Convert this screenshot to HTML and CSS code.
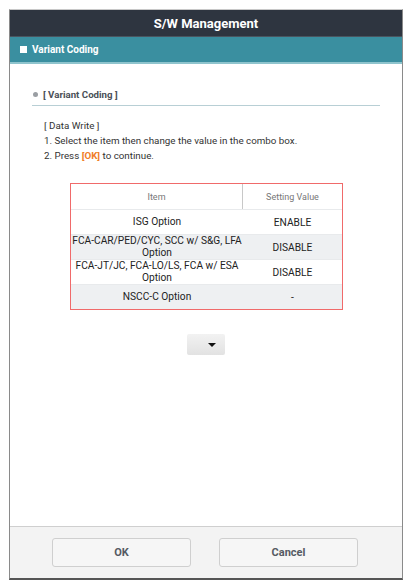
FILE: index.html
```html
<!DOCTYPE html>
<html>
<head>
<meta charset="utf-8">
<link rel="stylesheet" href="styles.css">
</head>
<body>
<div class="dialog">
  <div class="titlebar">S/W Management</div>
  <div class="subbar"><span class="sq"></span>Variant Coding</div>
  <div class="content">
    <div class="section-head"><span class="dot"></span>[ Variant Coding ]</div>
    <div class="instructions">
      <div>[ Data Write ]</div>
      <div>1. Select the item then change the value in the combo box.</div>
      <div>2. Press <span class="ok">[OK]</span> to continue.</div>
    </div>
    <div class="table">
      <div class="row head">
        <div class="c1">Item</div>
        <div class="c2">Setting Value</div>
      </div>
      <div class="row">
        <div class="c1">ISG Option</div>
        <div class="c2">ENABLE</div>
      </div>
      <div class="row alt">
        <div class="c1">FCA-CAR/PED/CYC, SCC w/ S&amp;G, LFA Option</div>
        <div class="c2">DISABLE</div>
      </div>
      <div class="row">
        <div class="c1">FCA-JT/JC, FCA-LO/LS, FCA w/ ESA Option</div>
        <div class="c2">DISABLE</div>
      </div>
      <div class="row alt">
        <div class="c1">NSCC-C Option</div>
        <div class="c2">-</div>
      </div>
    </div>
    <div class="combo-wrap">
      <div class="combo"><span class="tri"></span></div>
    </div>
  </div>
  <div class="footer">
    <div class="btn">OK</div>
    <div class="btn">Cancel</div>
  </div>
</div>
</body>
</html>
```
FILE: styles.css
```css
html, body {
  margin: 0;
  padding: 0;
  background: #ffffff;
}
body {
  font-family: Roboto, "Liberation Sans", Arial, sans-serif;
  padding: 9px 0 0 9px;
}
.dialog {
  width: 394px;
  height: 571px;
  box-sizing: border-box;
  border-left: 1px solid #8a8a8a;
  border-right: 1px solid #8a8a8a;
  border-bottom: 2px solid #555;
  border-top: 1px solid #c8c8c8;
  display: flex;
  flex-direction: column;
  background: #fff;
}
.titlebar {
  height: 26px;
  background: #2e3540;
  color: #fff;
  font-weight: bold;
  font-size: 13px;
  display: flex;
  align-items: center;
  justify-content: center;
  border-bottom: 1px solid #4a5560;
}
.subbar {
  height: 25px;
  background: #3a8fa0;
  color: #fff;
  font-weight: bold;
  font-size: 10px;
  display: flex;
  align-items: center;
  padding-left: 10px;
  border-bottom: 2px solid #8fc4cd;
}
.sq {
  width: 7px;
  height: 7px;
  background: #fff;
  margin-right: 5px;
}
.content {
  flex: 1;
  padding: 25px 22px 0 22px;
  display: flex;
  flex-direction: column;
}
.section-head {
  display: flex;
  align-items: center;
  font-size: 9.7px;
  font-weight: bold;
  color: #4a4f57;
  padding: 0 0 5px 1px;
  border-bottom: 1px solid #b8cfd5;
}
.dot {
  width: 5px;
  height: 5px;
  border-radius: 50%;
  background: #9a9ea3;
  margin-right: 5px;
}
.instructions {
  margin-top: 13px;
  padding-left: 12px;
  font-size: 9.8px;
  color: #333;
  line-height: 14.8px;
}
.ok {
  color: #f07d28;
  font-weight: bold;
}
.table {
  margin: 20px 0 0 38px;
  width: 273px;
  border: 1.5px solid #f06a6a;
  box-sizing: border-box;
}
.row {
  display: flex;
  height: 24px;
  border-top: 1px solid #e8eaec;
  font-size: 10.2px;
  color: #222;
}
.row.head {
  border-top: none;
  height: 25px;
  color: #777;
  font-size: 9px;
}
.row.alt {
  background: #eef0f2;
}
.c1 {
  width: 172px;
  display: flex;
  align-items: center;
  justify-content: center;
  text-align: center;
  line-height: 12px;
  padding: 0 1px;
  box-sizing: border-box;
}
.c2 {
  flex: 1;
  display: flex;
  align-items: center;
  justify-content: center;
}
.row.head .c1 {
  border-right: 1px solid #c8c8c8;
}
.combo-wrap {
  display: flex;
  justify-content: center;
  margin-top: 24px;
}
.combo {
  width: 38px;
  height: 21px;
  background: linear-gradient(#f2f2f2, #e2e2e2);
  border-radius: 2px;
  display: flex;
  align-items: center;
  justify-content: flex-end;
  padding-right: 9px;
  box-sizing: border-box;
}
.tri {
  width: 0;
  height: 0;
  border-left: 4px solid transparent;
  border-right: 4px solid transparent;
  border-top: 4px solid #111;
}
.footer {
  height: 51px;
  background: #f3f3f3;
  border-top: 1px solid #cfcfcf;
  display: flex;
  align-items: center;
  justify-content: center;
  gap: 28px;
  padding-right: 2px;
}
.btn {
  width: 139px;
  height: 29px;
  box-sizing: border-box;
  border: 1px solid #cfcfcf;
  border-radius: 3px;
  background: #f6f6f6;
  display: flex;
  align-items: center;
  justify-content: center;
  font-size: 11px;
  font-weight: bold;
  color: #555b63;
}
```
